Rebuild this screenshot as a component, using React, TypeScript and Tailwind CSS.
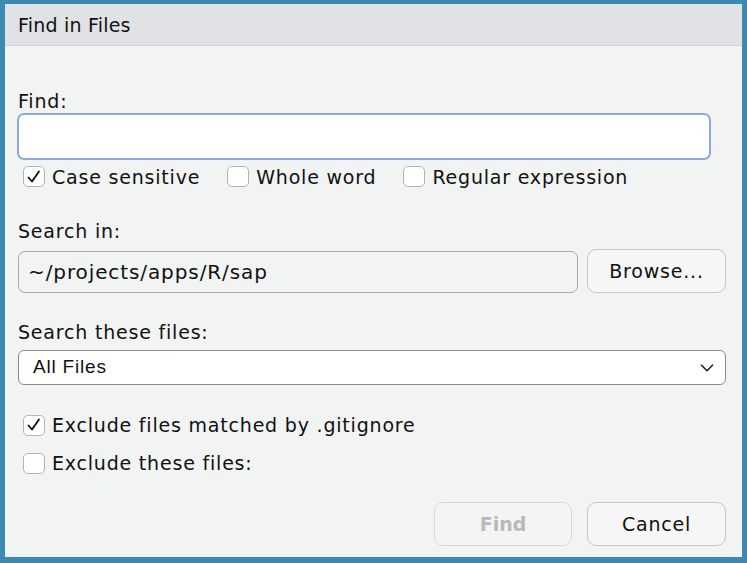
import { ChevronDown } from "lucide-react";

const font = { fontFamily: '"DejaVu Sans", sans-serif' };

function Checkbox({ checked, label }: { checked?: boolean; label: string }) {
  return (
    <label className="flex items-center gap-[7px] text-[19px] leading-[22px] tracking-[0.8px] text-[#111]">
      <span className="flex h-[21px] w-[22px] items-center justify-center rounded-[5px] border border-[#b4b4b4] bg-white">
        {checked && (
          <svg width="16" height="16" viewBox="0 0 16 16" fill="none">
            <path d="M2.5 8.5 L6 12.5 L13 2.5" stroke="#111" strokeWidth="1.8" strokeLinecap="round" strokeLinejoin="round" />
          </svg>
        )}
      </span>
      <span>{label}</span>
    </label>
  );
}

export default function App() {
  return (
    <div
      className="flex h-[563px] w-[747px] flex-col border-t-4 border-r-[5px] border-b-[6px] border-l-[5px] border-[#3b8ab2]"
      style={font}
    >
      {/* Title bar */}
      <div className="flex h-[42px] shrink-0 items-center border-b border-[#d3d4d7] bg-[#e1e2e6] pl-[13px] text-[19px] leading-[22px] tracking-[0.2px] text-[#111]">
        Find in Files
      </div>

      <div className="flex flex-1 flex-col bg-[#f2f3f3] pl-[13px] pr-[16px] text-[19px] tracking-[0.8px] text-[#111]">
        <div className="mt-[44px] leading-[22px]">Find:</div>
        <div className="mt-px -ml-px h-[47px] w-[694px] rounded-[7px] border-2 border-[#8fa8da] bg-white" />

        <div className="mt-[5px] ml-[5px] flex h-[23px] items-center">
          <Checkbox checked label="Case sensitive" />
          <div className="ml-[27px]">
            <Checkbox label="Whole word" />
          </div>
          <div className="ml-[27px]">
            <Checkbox label="Regular expression" />
          </div>
        </div>

        <div className="mt-[32px] leading-[22px]">Search in:</div>
        <div className="mt-[7px] flex items-end gap-[9px]">
          <div className="flex h-[42px] w-[560px] items-center rounded-[7px] border border-[#a6a6a6] pl-[9px] text-[20px] tracking-[0.9px]">
            ~/projects/apps/R/sap
          </div>
          <button className="h-[44px] w-[139px] rounded-[9px] border border-[#c6c6c6] bg-[#f6f6f6] text-[#111]">
            Browse...
          </button>
        </div>

        <div className="mt-[28px] leading-[22px]">Search these files:</div>
        <div className="mt-[7px] flex h-[35px] w-[708px] items-center justify-between rounded-[6px] border border-[#8c8c8c] bg-white pr-[7px] pl-[14px]">
          <span style={{ fontFamily: '"Liberation Sans", Arial, sans-serif' }}>All Files</span>
          <ChevronDown className="h-[22px] w-[22px] text-[#222]" strokeWidth={1.8} />
        </div>

        <div className="mt-[29px] ml-[5px] flex flex-col gap-[16px]">
          <Checkbox checked label="Exclude files matched by .gitignore" />
          <Checkbox label="Exclude these files:" />
        </div>

        <div className="mt-[28px] flex justify-end gap-[15px]">
          <button className="h-[44px] w-[138px] rounded-[9px] border border-[#d8d8d8] bg-[#f4f4f4] font-bold tracking-normal text-[#b9b9b9]">
            Find
          </button>
          <button className="h-[44px] w-[139px] rounded-[9px] border border-[#c6c6c6] bg-[#f6f6f6] text-[#111]">
            Cancel
          </button>
        </div>
      </div>
    </div>
  );
}
